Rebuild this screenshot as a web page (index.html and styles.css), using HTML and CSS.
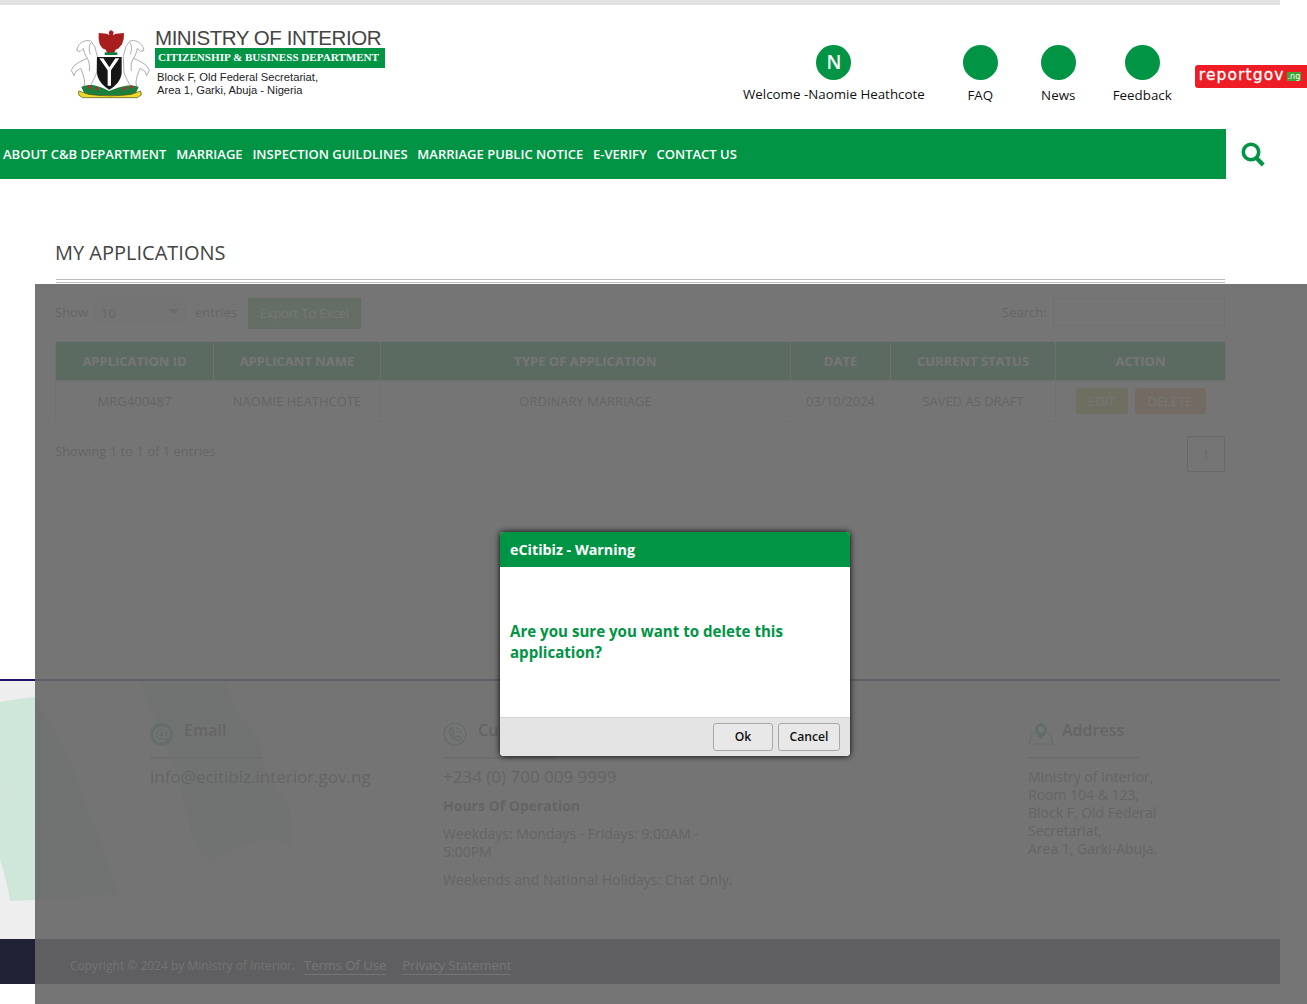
FILE: index.html
```html
<!DOCTYPE html>
<html lang="en">
<head>
    <meta charset="UTF-8">
    <meta name="viewport" content="width=device-width, initial-scale=1.0">
    <title>My Applications</title>
    <link rel="stylesheet" href="styles.css">
</head>
<body>
    <div class="page">
        <header class="site-header">
            <a class="logo" href="#">
                <svg class="crest" viewBox="60 85 240 216" width="80" height="72">
                    <!-- horses -->
                    <g fill="#ffffff" stroke="#9a9e9b" stroke-width="2.5">
                        <path d="M122 124C108 120 92 126 84 140L80 152 90 156 100 146C102 158 106 168 112 176 96 182 82 190 72 198L64 212 72 228 78 214 92 206C98 222 104 236 104 250L100 268H118C124 250 134 236 140 220L142 170 134 140z"/>
                        <path d="M112 176c6 10 8 24 6 38M122 130c-6 10-6 24 0 34" fill="none"/>
                    </g>
                    <g fill="#ffffff" stroke="#9a9e9b" stroke-width="2.5" transform="matrix(-1 0 0 1 362 0)">
                        <path d="M122 124C108 120 92 126 84 140L80 152 90 156 100 146C102 158 106 168 112 176 96 182 82 190 72 198L64 212 72 228 78 214 92 206C98 222 104 236 104 250L100 268H118C124 250 134 236 140 220L142 170 134 140z"/>
                        <path d="M112 176c6 10 8 24 6 38M122 130c-6 10-6 24 0 34" fill="none"/>
                    </g>
                    <!-- eagle -->
                    <path d="M183 91L191 97 189 106 198 102 222 100 221 118 216 134 206 146 197 150 192 160H172L167 150 157 146 149 134 146 118 146 100 170 102 178 106 176 97z" fill="#a81e1e"/>
                    <path d="M164 158h38v8h-38z" fill="#0e7a3e"/>
                    <!-- shield -->
                    <path d="M141 172h74v46c0 22-18 42-37 52-19-10-37-30-37-52z" fill="#161616"/>
                    <path d="M148 176l25 36v46h10v-46l25-36h-12l-18 27-18-27z" fill="#ffffff"/>
                    <!-- base -->
                    <path d="M94 262c30-12 50-4 84 12 36-14 58-22 88-12l-12 26H106z" fill="#1d7f3c"/>
                    <circle cx="118" cy="262" r="5" fill="#c8252c"/>
                    <circle cx="140" cy="266" r="5" fill="#c8252c"/>
                    <circle cx="222" cy="266" r="5" fill="#c8252c"/>
                    <circle cx="244" cy="262" r="5" fill="#c8252c"/>
                    <path d="M86 274l30 10c40 6 88 6 128 0l28-10 2 12-12 8H98l-12-8z" fill="#ecd92b" stroke="#4b4a12" stroke-width="2"/>
                </svg>
                <div class="logo-text">
                    <div class="logo-title">MINISTRY OF INTERIOR</div>
                    <div class="logo-dept">CITIZENSHIP &amp; BUSINESS DEPARTMENT</div>
                    <div class="logo-address">Block F, Old Federal Secretariat,<br>Area 1, Garki, Abuja - Nigeria</div>
                </div>
            </a>

            <div class="quick-links">
                <a class="quick-link welcome" href="#"><span class="circle">N</span><span>Welcome -Naomie Heathcote</span></a>
                <a class="quick-link" href="#"><span class="circle"></span><span class="quick-label">FAQ</span></a>
                <a class="quick-link news" href="#"><span class="circle"></span><span class="quick-label">News</span></a>
                <a class="quick-link feedback" href="#"><span class="circle"></span><span class="quick-label">Feedback</span></a>
            </div>

            <a class="reportgov" href="#">reportgov<span class="ng">.ng</span></a>
        </header>

        <div class="nav-row">
            <nav class="main-nav">
                <a href="#">About C&amp;B Department</a>
                <a href="#">Marriage</a>
                <a href="#">Inspection Guildlines</a>
                <a href="#">Marriage Public Notice</a>
                <a href="#">E-Verify</a>
                <a href="#">Contact Us</a>
            </nav>
            <a class="search-toggle" href="#">
                <svg viewBox="0 0 24 25" width="24" height="25">
                    <circle cx="10" cy="10" r="7.7" fill="none" stroke="#009444" stroke-width="3.6"/>
                    <path d="M15.5 16l6.7 7" fill="none" stroke="#009444" stroke-width="4.2"/>
                </svg>
            </a>
        </div>

        <main class="content">
            <h2 class="page-title">MY APPLICATIONS</h2>

            <div class="table-controls">
                <div class="length-control">
                    <span>Show</span>
                    <div class="fake-select">10<span class="select-arrow"></span></div>
                    <span>entries</span>
                    <button class="btn-export">Export To Excel</button>
                </div>
                <label class="search-control">Search: <input type="text"></label>
            </div>

            <table class="app-table">
                <colgroup>
                    <col class="col-id"><col class="col-name"><col class="col-type"><col class="col-date"><col class="col-status"><col class="col-action">
                </colgroup>
                <thead>
                    <tr>
                        <th>APPLICATION ID</th>
                        <th>APPLICANT NAME</th>
                        <th>TYPE OF APPLICATION</th>
                        <th>DATE</th>
                        <th>CURRENT STATUS</th>
                        <th>ACTION</th>
                    </tr>
                </thead>
                <tbody>
                    <tr>
                        <td>MRG400487</td>
                        <td>NAOMIE HEATHCOTE</td>
                        <td>ORDINARY MARRIAGE</td>
                        <td>03/10/2024</td>
                        <td>SAVED AS DRAFT</td>
                        <td><a class="btn-edit" href="#">EDIT</a><a class="btn-delete" href="#">DELETE</a></td>
                    </tr>
                </tbody>
            </table>

            <div class="table-footer">
                <span class="table-info">Showing 1 to 1 of 1 entries</span>
                <a class="page-box" href="#">1</a>
            </div>
        </main>

        <footer class="site-footer">
            <svg class="flag-swoosh" viewBox="0 0 960 780" width="320" height="260">
                <path d="M0 63C35 56 70 52 105 48C125 90 165 150 190 203C215 255 235 295 250 343C270 410 320 520 355 633V638C250 648 130 656 30 660C25 620 10 570 0 533z" fill="#cfe6db"/>
                <path d="M0 300C40 340 75 410 105 460" fill="none" stroke="#d8dcd8" stroke-width="2"/>
                <path d="M420 8H680C690 50 700 75 720 103C745 135 770 160 780 193C790 225 790 245 800 273C815 315 855 345 870 393C875 425 875 460 875 493C845 480 815 472 780 478C730 490 680 515 635 543C610 525 600 515 590 493C575 460 570 430 560 393C545 340 535 300 520 253C505 215 495 180 480 143C460 100 440 55 420 8z" fill="#cfe6db"/>
            </svg>
            <div class="footer-cols">
                <div class="footer-col col-email">
                    <div class="footer-head">
                        <span class="icon-at">@</span>
                        <h4>Email</h4>
                    </div>
                    <a class="footer-big" href="#">info@ecitibiz.interior.gov.ng</a>
                </div>
                <div class="footer-col col-care">
                    <div class="footer-head">
                        <svg class="footer-icon" viewBox="0 0 24 24" width="24" height="24">
                            <circle cx="12" cy="12" r="11" fill="none" stroke="#4ea877" stroke-width="1.2"/>
                            <path d="M8 6l2.500 3-1.300 2c.8 2 2 3.300 4 4.300l2-1.300 3 2.500c-1 2-3 2.500-5 1.500-3-1.500-5.500-4-6.500-7-.6-2 .3-4 1.800-5z" fill="none" stroke="#4ea877" stroke-width="1.300"/>
                            <path d="M13 6c2.500.3 4.500 2.300 5 5M13 9c1 .2 2 1 2.300 2.200" fill="none" stroke="#4ea877" stroke-width="1.200"/>
                        </svg>
                        <h4>Customer Care</h4>
                    </div>
                    <a class="footer-big" href="#">+234 (0) 700 009 9999</a>
                    <p class="footer-hours">Hours Of Operation</p>
                    <p>Weekdays: Mondays - Fridays: 9:00AM - 5:00PM</p>
                    <p>Weekends and National Holidays: Chat Only.</p>
                </div>
                <div class="footer-col col-address">
                    <div class="footer-head">
                        <svg class="footer-icon" viewBox="0 0 26 24" width="26" height="24">
                            <path d="M7 12H4L1 22h24l-3-10h-3" fill="none" stroke="#4ea877" stroke-width="1.100"/>
                            <path d="M13 18c-3-4-6-7-6-10.500a6 6 0 0 1 12 0C19 11 16 14 13 18z" fill="#4ea877"/>
                            <circle cx="13" cy="7.500" r="3" fill="#fff"/>
                        </svg>
                        <h4>Address</h4>
                    </div>
                    <p>Ministry of Interior,<br>Room 104 &amp; 123,<br>Block F, Old Federal<br>Secretariat,<br>Area 1, Garki-Abuja.</p>
                </div>
            </div>
            <div class="footer-bottom">
                <span class="copyright">Copyright © 2024 by Ministry of Interior.</span>
                <a href="#">Terms Of Use</a>
                <a href="#">Privacy Statement</a>
            </div>
        </footer>
    </div>

    <div class="overlay"></div>

    <div class="dialog">
        <div class="dialog-title">eCitibiz - Warning</div>
        <div class="dialog-body">Are you sure you want to delete this application?</div>
        <div class="dialog-buttons">
            <button class="btn-ok">Ok</button>
            <button class="btn-cancel">Cancel</button>
        </div>
    </div>
</body>
</html>
```

FILE: styles.css
```css
:root {
    --green: #009444;
    --text: #333333;
    --muted: #444444;
    --border: #dddddd;
}

html, body {
    margin: 0;
    padding: 0;
    overflow: hidden;
    height: 1004px;
    background-color: #ffffff;
}

body {
    font-family: "Open Sans", Arial, sans-serif;
    font-size: 13px;
    color: var(--text);
    position: relative;
}

a {
    color: inherit;
    text-decoration: none;
}

.page {
    width: 1280px;
    border-top: 5px solid #e2e2e2;
}

/* header */
.site-header {
    display: flex;
    height: 124px;
    padding-left: 70px;
    width: 1210px;
}

.logo {
    display: flex;
    align-items: flex-start;
    padding-top: 23px;
    width: 673px;
    flex-shrink: 0;
}

.crest {
    margin-right: 5px;
    flex-shrink: 0;
}

.logo-title {
    font-family: "Liberation Sans", Arial, sans-serif;
    font-size: 20.5px;
    letter-spacing: -0.45px;
    line-height: 20px;
    color: #444444;
    white-space: nowrap;
}

.logo-dept {
    background-color: var(--green);
    color: #ffffff;
    font-family: "Liberation Serif", serif;
    font-weight: bold;
    font-size: 11.1px;
    line-height: 19px;
    height: 20px;
    width: 227px;
    padding-left: 3px;
    white-space: nowrap;
}

.logo-address {
    font-family: "Liberation Sans", Arial, sans-serif;
    font-size: 11.2px;
    line-height: 13px;
    color: #222222;
    padding: 3px 0 0 2px;
}

.quick-links {
    display: flex;
    padding-top: 40px;
    flex-shrink: 0;
    gap: 38px;
}

.quick-link {
    display: flex;
    flex-direction: column;
    align-items: center;
    color: #111111;
    font-size: 13.35px;
    line-height: 18px;
    white-space: nowrap;
}

.quick-label {
    margin-top: 1px;
}

.news {
    margin-left: 5px;
}

.feedback {
    margin-left: -1px;
}

.circle {
    width: 35px;
    height: 35px;
    border-radius: 50%;
    background-color: var(--green);
    color: #ffffff;
    font-size: 19px;
    font-weight: 600;
    line-height: 35px;
    text-align: center;
    margin-bottom: 5px;
}

.reportgov {
    display: flex;
    align-items: center;
    flex-shrink: 0;
    width: 114px;
    height: 20px;
    margin: 60px 0 0 23px;
    padding: 0 0 3px 4px;
    background-color: #ee1c25;
    border-radius: 3px;
    color: #ffffff;
    font-family: "DejaVu Sans", sans-serif;
    font-size: 15.5px;
    letter-spacing: 1.1px;
    -webkit-text-stroke: 0.3px #ffffff;
}

.ng {
    background-color: #3fa535;
    font-size: 8px;
    line-height: 9px;
    letter-spacing: 0;
    -webkit-text-stroke: 0;
    margin: 3px 0 0 2px;
    padding: 0 1px;
}

/* nav */
.nav-row {
    display: flex;
    align-items: center;
}

.main-nav {
    display: flex;
    align-items: center;
    gap: 9.8px;
    width: 1223px;
    height: 50px;
    padding-left: 3px;
    background-color: var(--green);
}

.main-nav a {
    color: #ffffff;
    font-size: 13px;
    font-weight: 600;
    text-transform: uppercase;
    white-space: nowrap;
}

.search-toggle {
    display: block;
    height: 25px;
    margin-left: 15px;
}

/* main */
.content {
    height: 500px;
    padding-left: 55px;
    width: 1171px;
}

.page-title {
    margin: 0 0 0 1px;
    padding: 60px 0 12px;
    width: 1169px;
    font-size: 20px;
    font-weight: 400;
    line-height: 28px;
    text-indent: -1px;
    color: var(--muted);
    border-bottom: 4px double #bbbbbb;
}

.table-controls {
    display: flex;
    justify-content: space-between;
    margin-top: 14px;
    height: 31px;
    width: 1170px;
    color: #555555;
}

.length-control {
    display: flex;
    align-items: flex-start;
    line-height: 30px;
}

.fake-select {
    position: relative;
    width: 92px;
    height: 26px;
    margin: 1px 9px 0 6px;
    padding-left: 6px;
    line-height: 28px;
    border: 1px solid #e8e8e8;
    background-color: #f3f6f8;
    box-sizing: border-box;
}

.select-arrow {
    position: absolute;
    right: 5px;
    top: 10px;
    border-left: 6px solid transparent;
    border-right: 6px solid transparent;
    border-top: 5px solid #999999;
}

.btn-export {
    height: 31px;
    width: 113px;
    margin: 1px 0 0 11px;
    border: 1px solid #4cae4c;
    background-color: #5cb85c;
    color: #ffffff;
    font-family: inherit;
    font-size: 12.5px;
    padding: 0;
}

.search-control {
    padding-top: 1px;
    line-height: 28px;
}

.search-control input {
    width: 172px;
    height: 28px;
    margin-left: 3px;
    border: 1px solid #cccccc;
    box-sizing: border-box;
    vertical-align: top;
}

.app-table {
    width: 1171px;
    margin-top: 13px;
    border-collapse: collapse;
    table-layout: fixed;
    text-align: center;
}

.col-id { width: 158px; }
.col-name { width: 167px; }
.col-type { width: 410px; }
.col-date { width: 100px; }
.col-status { width: 165px; }

.app-table th {
    height: 38px;
    padding: 0;
    background-color: var(--green);
    color: #ffffff;
    font-weight: 700;
    border: 1px solid #cccccc;
}

.app-table td {
    height: 40px;
    padding: 0;
    color: #555555;
    border: 1px solid var(--border);
}

.btn-edit, .btn-delete {
    display: inline-block;
    height: 26px;
    line-height: 26px;
    border-radius: 3px;
    color: #ffffff;
}

.btn-edit {
    width: 52px;
    background-color: #b6b63a;
    margin-right: 7px;
}

.btn-delete {
    width: 71px;
    background-color: #e49a4e;
}

.table-footer {
    display: flex;
    justify-content: space-between;
    align-items: center;
    width: 1170px;
    margin-top: 14px;
    color: #555555;
}

.table-info {
    margin-bottom: 7px;
}

.page-box {
    width: 38px;
    height: 36px;
    line-height: 36px;
    text-align: center;
    border: 1px solid #777777;
    border-radius: 2px;
    box-sizing: border-box;
    color: #777777;
}

/* footer */
.site-footer {
    position: relative;
    background-color: #eeeeee;
    border-top: 2px solid #1b1464;
    height: 303px;
}

.flag-swoosh {
    position: absolute;
    left: 0;
    top: 0;
}

.footer-cols {
    position: relative;
    display: flex;
    height: 258px;
    padding-left: 150px;
    box-sizing: border-box;
}

.footer-col {
    position: relative;
    padding-top: 37px;
}

.footer-col p {
    margin: 0 0 10px;
    font-size: 14px;
    line-height: 18px;
    color: #555555;
}

.col-email {
    width: 293px;
}

.col-email::after {
    content: "";
    position: absolute;
    left: 197px;
    top: 39px;
    height: 128px;
    border-left: 1px solid #e2e2e2;
}

.col-care {
    width: 585px;
}

.col-care p {
    width: 295px;
}

.col-address {
    width: 150px;
}

.footer-head {
    display: flex;
    align-items: flex-start;
    gap: 11px;
    width: 111px;
    height: 39px;
    border-bottom: 2px solid #aaaaaa;
    margin-bottom: 6px;
}

.footer-head h4 {
    margin: 0;
    font-size: 16px;
    font-weight: 600;
    line-height: 24px;
    color: #555555;
    white-space: nowrap;
}

.icon-at, .footer-icon {
    flex-shrink: 0;
    margin-top: 4px;
}

.icon-at {
    width: 23px;
    height: 23px;
    margin-top: 5px;
    border-radius: 50%;
    background-color: #5cb98a;
    color: #ffffff;
    font-size: 20px;
    font-weight: 600;
    line-height: 21px;
    text-align: center;
}

.col-address .footer-head {
    gap: 8px;
}

.footer-big {
    display: block;
    font-size: 17px;
    line-height: 24px;
    color: #555555;
    white-space: nowrap;
    margin-bottom: 8px;
}

.footer-col p.footer-hours {
    font-weight: 700;
    margin-bottom: 10px;
}

.col-address p {
    margin-top: 9px;
}

.footer-bottom {
    display: flex;
    align-items: center;
    height: 45px;
    padding: 8px 0 0 70px;
    background-color: #212135;
    color: #ffffff;
    box-sizing: border-box;
}

.copyright {
    font-size: 12px;
    color: #dddddd;
    margin-right: 9px;
}

.footer-bottom a {
    font-size: 13px;
    color: #ffffff;
    border-bottom: 1px solid #ffffff;
    margin-right: 16px;
}

/* modal */
.overlay {
    position: absolute;
    left: 35px;
    top: 284px;
    right: 0;
    bottom: 0;
    background-color: rgba(102, 102, 102, 0.9);
}

.dialog {
    position: absolute;
    left: 500px;
    top: 532px;
    width: 350px;
    height: 224px;
    display: flex;
    flex-direction: column;
    border-radius: 4px;
    overflow: hidden;
    box-shadow: 0 0 6px #000000;
    background-color: #ffffff;
}

.dialog-title {
    height: 35px;
    padding-left: 10px;
    background-color: var(--green);
    color: #ffffff;
    font-size: 14.3px;
    font-weight: 700;
    line-height: 35px;
}

.dialog-body {
    height: 150px;
    display: flex;
    align-items: center;
    padding: 0 10px;
    color: var(--green);
    font-size: 15.1px;
    font-weight: 700;
    line-height: 21px;
}

.dialog-buttons {
    flex-grow: 1;
    display: flex;
    justify-content: flex-end;
    align-items: center;
    gap: 5px;
    padding-right: 10px;
    background-color: #e4e4e4;
    border-top: 1px solid #d2d2d2;
}

.dialog-buttons button {
    height: 28px;
    border: 1px solid #a8a8a8;
    border-radius: 3px;
    background-color: #e8e8e8;
    color: #111111;
    font-family: inherit;
    font-size: 12.2px;
    font-weight: 600;
    padding: 0 0 2px;
}

.btn-ok {
    width: 60px;
}

.btn-cancel {
    width: 62px;
}
```
